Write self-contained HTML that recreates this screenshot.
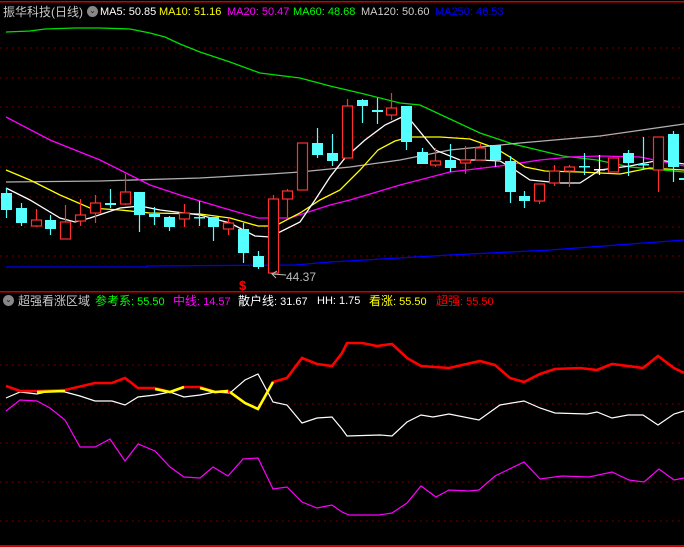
<!DOCTYPE html>
<html><head><meta charset="utf-8"><style>
html,body{margin:0;padding:0;background:#000;width:684px;height:547px;overflow:hidden}
svg{position:absolute;left:0;top:0}
.t{position:absolute;font-family:"Liberation Sans","Noto Sans CJK SC",sans-serif;font-size:11px;white-space:nowrap;line-height:14px}
.t b{font-weight:normal;font-size:12px}
</style></head><body>
<svg width="684" height="547" viewBox="0 0 684 547">
<rect x="0" y="1" width="684" height="1.5" fill="#c00"/>
<rect x="0" y="291" width="684" height="1.5" fill="#c00"/>
<rect x="0" y="545" width="684" height="2" fill="#c00"/>
<g stroke="#800" stroke-dasharray="1.5,4.5" stroke-width="1">
<line x1="0" y1="48" x2="684" y2="48"/><line x1="0" y1="78" x2="684" y2="78"/><line x1="0" y1="107" x2="684" y2="107"/><line x1="0" y1="137" x2="684" y2="137"/><line x1="0" y1="167" x2="684" y2="167"/><line x1="0" y1="197" x2="684" y2="197"/><line x1="0" y1="227" x2="684" y2="227"/><line x1="0" y1="256" x2="684" y2="256"/>
<line x1="0" y1="365" x2="684" y2="365"/><line x1="0" y1="404" x2="684" y2="404"/><line x1="0" y1="443" x2="684" y2="443"/><line x1="0" y1="482" x2="684" y2="482"/><line x1="0" y1="521" x2="684" y2="521"/>
</g>
<g fill="none" stroke-width="1.3">
<polyline stroke="#00e000" points="6,32 30,31 45,29 75,28 100,28 130,29 135,30 150,33 165,37 180,44 200,52 230,62 260,73 300,78 330,86 360,93 400,103 420,105 450,119 480,133 513,144 563,156 597,160 630,167 684,172"/>
<polyline stroke="#b0b0b0" points="6,182 100,181 200,178 270,174 300,172 350,167 400,160 450,150 520,143 600,136 684,124"/>
<polyline stroke="#0000ff" points="6,267 147,267 147,266 295,265 330,262 450,255 550,250 684,240"/>
<polyline stroke="#ff00ff" points="6,117 50,140 100,160 150,185 180,195 220,207 258,218 290,218 330,205 350,200 400,185 450,172 500,166 540,160 570,157 600,156 640,157 684,166"/>
<polyline stroke="#ffff00" points="6,170 30,180 60,195 90,208 120,210 150,213 200,214 230,218 258,226 275,226 300,213 320,200 340,190 360,170 378,150 395,141 410,137 440,137 470,139 495,148 510,157 525,167 545,171 580,172 620,174 650,168 684,170"/>
<polyline stroke="#ffffff" points="6,188 30,200 60,218 75,222 90,218 120,208 140,206 160,210 200,215 230,223 255,236 270,237 300,222 315,200 330,177 345,158 365,140 385,125 402,117 412,122 435,150 460,160 480,160 500,161 515,170 530,180 560,183 580,183 600,170 630,166 660,160 684,164"/>
</g>
<g id="c" stroke-width="1.2"></g>
<g fill="none">
<polyline stroke="#ff00ff" stroke-width="1.2" points="6,411 20,400 37,401 50,408 65,420 80,447 95,447 110,439 125,461 138,444 155,451 170,467 184,477 200,478 213,467 228,476 243,459 258,458 273,489 287,487 302,502 317,508 332,505 342,512 349,515 379,515 392,513 407,503 421,486 436,497 449,490 469,491 479,490 495,476 524,462 540,479 562,476 589,477 612,472 629,480 644,482 659,469 674,480 684,478"/>
<polyline stroke="#ffffff" stroke-width="1.2" points="6,398 20,392 37,394 50,391 65,392 80,396 95,401 112,401 125,405 138,397 155,395 170,392 184,397 200,395 215,392 230,393 245,380 258,374 273,402 287,405 302,423 317,418 332,417 342,429 347,436 380,435 392,436 407,422 421,415 433,417 449,414 479,420 500,405 524,401 540,408 555,413 587,414 597,412 612,418 628,415 643,415 658,425 674,414 684,411"/>
<polyline stroke="#ff0000" stroke-width="2.6" points="6,386 20,391 37,391 65,390 95,383 112,383 125,378 138,388 155,388 170,392 184,387 200,387 215,392 228,391 245,403 258,409 273,382 287,378 302,358 317,364 332,366 342,353 347,343 362,343 377,346 392,344 407,358 421,366 449,368 480,361 495,365 510,378 524,382 540,374 555,369 580,368 597,370 612,364 643,368 658,356 674,368 684,373"/>
<polyline stroke="#ffff00" stroke-width="2.6" points="37,392 65,391"/>
<polyline stroke="#ffff00" stroke-width="2.6" points="155,389 170,392 184,387"/>
<polyline stroke="#ffff00" stroke-width="2.6" points="200,388 215,392 228,391"/>
<polyline stroke="#ffff00" stroke-width="2.6" points="230,392 245,403 258,409 273,382"/>
</g>
<polyline fill="none" stroke="#bbb" stroke-width="1" points="277,271 272,274 276,278 272,274 286,275"/>
</svg>
<div class="t" style="left:3px;top:5px;color:#c8c8c8"><b>振华科技(日线)</b></div>
<div class="t" style="left:87px;top:6px;width:11px;height:11px;border-radius:50%;background:#888;line-height:9px;font-size:8px;text-align:center;color:#222">⌄</div>
<div class="t" style="left:100px;top:5px;color:#fff">MA5: 50.85</div>
<div class="t" style="left:159px;top:5px;color:#ff0">MA10: 51.16</div>
<div class="t" style="left:227px;top:5px;color:#f0f">MA20: 50.47</div>
<div class="t" style="left:293px;top:5px;color:#0f0">MA60: 48.68</div>
<div class="t" style="left:361px;top:5px;color:#ccc">MA120: 50.60</div>
<div class="t" style="left:435px;top:5px;color:#00f">MA250: 46.53</div>
<div class="t" style="left:286px;top:270px;color:#bbb;font-size:12px">44.37</div>
<div class="t" style="left:239px;top:279px;color:#f00;font-size:13px;font-weight:bold">$</div>
<div class="t" style="left:3px;top:295px;width:11px;height:11px;border-radius:50%;background:#888;line-height:9px;font-size:8px;text-align:center;color:#222">⌄</div>
<div class="t" style="left:18px;top:294px;color:#c8c8c8"><b>超强看涨区域</b></div>
<div class="t" style="left:95px;top:294px;color:#0f0"><b>参考系</b>: 55.50</div>
<div class="t" style="left:173px;top:294px;color:#f0f"><b>中线</b>: 14.57</div>
<div class="t" style="left:238px;top:294px;color:#fff"><b>散户线</b>: 31.67</div>
<div class="t" style="left:317px;top:294px;color:#fff">HH: 1.75</div>
<div class="t" style="left:369px;top:294px;color:#ff0"><b>看涨</b>: 55.50</div>
<div class="t" style="left:436px;top:294px;color:#f00"><b>超强</b>: 55.50</div>
<script>
var d=[[6,'c',193,210,188,218],[21,'c',208,223,203,226],[36,'r',220,226,209,227],[50,'c',220,229,215,235],[65,'r',222,239,205,239],[80,'r',215,221,199,226],[95,'r',203,213,195,223],[110,'c',203,205,189,208],[125,'r',192,204,174,205],[139,'c',192,215,192,232],[154,'c',214,217,207,225],[169,'c',217,227,216,231],[184,'r',213,219,204,227],[199,'c',217,218,201,226],[213,'c',217,227,217,241],[228,'r',223,229,218,235],[243,'c',229,253,223,263],[258,'c',256,267,251,269],[273,'r',199,273,195,273],[287,'r',191,199,189,219],[302,'r',143,190,143,190],[317,'c',143,155,128,158],[332,'c',153,161,134,166],[347,'r',106,158,99,158],[362,'c',100,106,99,123],[377,'c',110,112,98,124],[391,'r',108,115,93,120],[406,'c',106,142,106,150],[422,'c',152,164,148,164],[435,'r',161,165,148,167],[450,'c',160,168,144,172],[465,'r',160,163,146,174],[480,'r',148,160,144,160],[495,'c',145,160,145,167],[510,'c',161,192,156,203],[524,'c',196,201,191,208],[539,'r',184,201,184,204],[554,'r',171,183,165,186],[569,'r',167,171,165,187],[584,'c',166,167,153,175],[599,'w',169,170,155,175],[613,'r',158,172,158,172],[628,'c',153,163,150,176],[643,'c',164,165,137,170],[658,'r',137,170,137,192],[673,'c',134,167,131,182],[684,'c',178,180,178,180]];
var g=document.getElementById('c'),s='';
d.forEach(function(a){var x=a[0],col=a[1]=='r'?'#ff3030':(a[1]=='w'?'#fff':'#55ffff');
s+='<line x1="'+(x+.5)+'" y1="'+a[4]+'" x2="'+(x+.5)+'" y2="'+a[5]+'" stroke="'+col+'"/>';
var h=Math.max(a[3]-a[2],1.5);
if(a[1]=='r')s+='<rect x="'+(x-4.5)+'" y="'+a[2]+'" width="10" height="'+h+'" fill="#000" stroke="'+col+'"/>';
else s+='<rect x="'+(x-5)+'" y="'+a[2]+'" width="11" height="'+h+'" fill="'+col+'"/>';});
g.innerHTML=s;
</script>
</body></html>
